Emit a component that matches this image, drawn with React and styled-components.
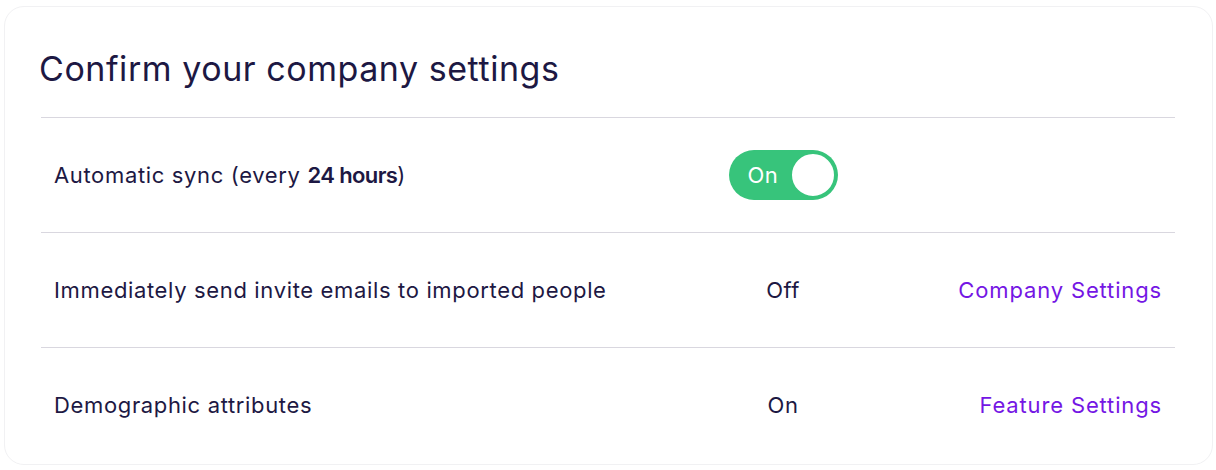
import React from 'react';
import styled, { createGlobalStyle } from 'styled-components';

const Global = createGlobalStyle`
  body {
    margin: 0;
    background: #fff;
    font-family: Inter, "Noto Sans", sans-serif;
    color: #1d1843;
  }
`;

const Card = styled.div`
  box-sizing: border-box;
  width: 1209px;
  height: 459px;
  margin: 6px 0 0 4px;
  border: 1.5px solid #f1f1f3;
  border-radius: 20px;
  padding: 40px 37px 0 36px;
`;

const Title = styled.h1`
  margin: 0 0 0 -2px;
  font-size: 34px;
  font-weight: 400;
  line-height: 44px;
  letter-spacing: 0.55px;
  padding-bottom: 26px;
  color: #1d1843;
`;

const Row = styled.div`
  display: grid;
  grid-template-columns: 674px 110px 1fr;
  align-items: center;
  height: 115px;
  padding: 0 13px;
  border-top: 1.5px solid #d9d7df;
  box-sizing: border-box;
`;

const Label = styled.div`
  font-size: 22px;
  letter-spacing: 0.65px;
  color: #1d1843;

  b {
    font-weight: 600;
    letter-spacing: -0.6px;
  }
`;

const Status = styled.div`
  display: flex;
  justify-content: center;
  font-size: 22px;
  letter-spacing: 0.5px;
  color: #1d1843;
`;

const Link = styled.a`
  justify-self: end;
  font-size: 22px;
  letter-spacing: 0.85px;
  color: #7416e4;
  text-decoration: none;
  cursor: pointer;
`;

const Toggle = styled.button`
  display: flex;
  align-items: center;
  justify-content: space-between;
  box-sizing: border-box;
  width: 109px;
  height: 50px;
  padding: 0 2px 0 19px;
  border: none;
  border-radius: 25px;
  background: #37c47b;
  color: #fff;
  font-family: inherit;
  font-size: 22px;
  letter-spacing: 0.4px;
  cursor: pointer;
`;

const Knob = styled.span`
  box-sizing: border-box;
  width: 46px;
  height: 46px;
  border-radius: 50%;
  background: #fff;
  border: 2px solid #37c47b;
`;

const rows = [
  { label: 'Immediately send invite emails to imported people', status: 'Off', link: 'Company Settings' },
  { label: 'Demographic attributes', status: 'On', link: 'Feature Settings' },
];

export default function App() {
  return (
    <>
      <Global />
      <Card>
        <Title>Confirm your company settings</Title>
        <Row>
          <Label>
            Automatic sync (every <b>24 hours</b>)
          </Label>
          <Status>
            <Toggle>
              On
              <Knob />
            </Toggle>
          </Status>
          <span />
        </Row>
        {rows.map((r) => (
          <Row key={r.label}>
            <Label>{r.label}</Label>
            <Status>{r.status}</Status>
            <Link>{r.link}</Link>
          </Row>
        ))}
      </Card>
    </>
  );
}
